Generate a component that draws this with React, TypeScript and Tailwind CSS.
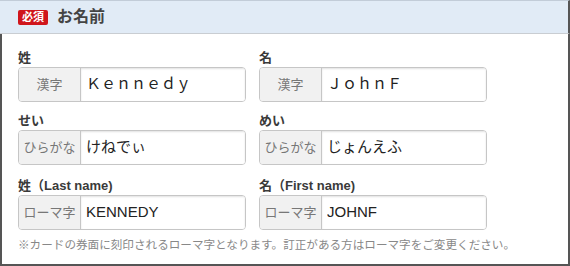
import React from "react";

type Field = { label: string; prefix: string; value: string };

const ROWS: { left: Field; right: Field; top: string }[] = [
  {
    top: "mt-[16px]",
    left: { label: "姓", prefix: "漢字", value: "Ｋｅｎｎｅｄｙ" },
    right: { label: "名", prefix: "漢字", value: "ＪｏｈｎＦ" },
  },
  {
    top: "mt-[11px]",
    left: { label: "せい", prefix: "ひらがな", value: "けねでぃ" },
    right: { label: "めい", prefix: "ひらがな", value: "じょんえふ" },
  },
  {
    top: "mt-[13px]",
    left: { label: "姓（Last name)", prefix: "ローマ字", value: "KENNEDY" },
    right: { label: "名（First name)", prefix: "ローマ字", value: "JOHNF" },
  },
];

function NameField({ field }: { field: Field }) {
  return (
    <div className="flex flex-col">
      <label className="text-[13px] leading-[16px] font-bold text-[#3a3a3a] mb-[1px]">{field.label}</label>
      <div className="flex h-[35px] rounded-[4px] border border-[#c6c6c6] overflow-hidden bg-white">
        <span className="w-[62px] shrink-0 flex items-center justify-center bg-[#f1f1f1] border-r border-[#c6c6c6] text-[13px] text-[#777]">
          {field.prefix}
        </span>
        <input
          readOnly
          value={field.value}
          className="flex-1 min-w-0 px-[5px] text-[15px] text-[#222] bg-white outline-none shadow-[inset_0_1px_2px_rgba(0,0,0,0.12)]"
        />
      </div>
    </div>
  );
}

export default function App() {
  return (
    <div
      className="w-[570px] h-[266px] bg-white flex flex-col overflow-hidden"
      style={{ fontFamily: '"Liberation Sans", "Noto Sans CJK JP", sans-serif' }}
    >
      <header className="h-[34px] shrink-0 flex items-center pl-[18px] bg-[#e1ebf6] border-t border-[#c2ccd8] border-b border-b-[#c9cdd2] border-r-2 border-r-[#555]">
        <span className="h-[15px] px-[4px] flex items-center rounded-[2px] bg-[#d0151b] text-white text-[11px] font-bold leading-none">
          必須
        </span>
        <h2 className="ml-[9px] text-[16px] font-bold text-[#444]">お名前</h2>
      </header>

      <div className="flex-1 flex flex-col pl-[16px] border-l-2 border-r-2 border-b-2 border-[#555]">
        {ROWS.map((row, i) => (
          <div key={i} className={`grid grid-cols-[228px_228px] gap-x-[13px] ${row.top}`}>
            <NameField field={row.left} />
            <NameField field={row.right} />
          </div>
        ))}
        <p className="mt-[8px] text-[11.6px] leading-[14px] text-[#888]">
          ※カードの券面に刻印されるローマ字となります。訂正がある方はローマ字をご変更ください。
        </p>
      </div>
    </div>
  );
}
